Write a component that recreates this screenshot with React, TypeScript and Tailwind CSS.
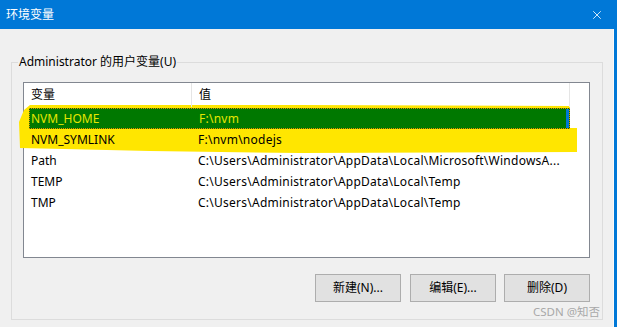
import { X } from "lucide-react";

const rows = [
  { name: "NVM_SYMLINK", value: "F:\\nvm\\nodejs" },
  { name: "Path", value: "C:\\Users\\Administrator\\AppData\\Local\\Microsoft\\WindowsA..." },
  { name: "TEMP", value: "C:\\Users\\Administrator\\AppData\\Local\\Temp" },
  { name: "TMP", value: "C:\\Users\\Administrator\\AppData\\Local\\Temp" },
];

export default function App() {
  return (
    <div className="relative w-[617px] h-[327px] bg-[#0078d7] flex flex-col text-[12px] leading-4 font-['Noto_Sans','Noto_Sans_CJK_SC',sans-serif] overflow-hidden">
      <header className="h-[29px] flex items-center justify-between shrink-0">
        <span className="ml-[6px] text-white">环境变量</span>
        <X className="mr-[13px] w-[14px] h-[14px] text-white" strokeWidth={1.4} />
      </header>

      <main className="flex-1 w-[614px] bg-[#f0f0f0] border-r border-[#fafafa]">
        <fieldset className="mt-[25px] ml-[11px] w-[592px] h-[266px] border border-[#dcdcdc]">
          <legend className="ml-[6px] px-[1px] text-black">Administrator 的用户变量(U)</legend>

          <div className="relative mt-[12px] ml-[11px] w-[567px] h-[176px] border border-[#828790] bg-white">
            {/* yellow marker scribble */}
            <svg className="absolute left-[-8px] top-[20px] pointer-events-none" width="565" height="54" viewBox="0 0 565 54">
              <path d="M14 2 L280 2 L554 3 L554 25 L561 25 L561 49 L284 50 L134 48 L4 45 L3 19 L8 7 Z" fill="#ffe600" />
            </svg>

            <div className="relative z-10 flex h-[24px] items-center text-black">
              <div className="w-[168px] h-full flex items-center pl-[7px] border-r border-[#e5e5e5]">变量</div>
              <div className="w-[378px] h-full flex items-center pl-[7px] border-r border-[#e5e5e5]">值</div>
            </div>

            <div className="relative z-10 mt-[1px] ml-[5px] w-[541px]">
              <div className="flex h-[21px] items-center bg-[#007800] border border-dotted border-[#e08a00] text-[#e6e600]">
                <span className="w-[169px] pl-[1px]">NVM_HOME</span>
                <span className="flex-1 tracking-[0.25px]">F:\nvm</span>
                <span className="w-[3px] h-full bg-[#0078d7]" />
              </div>
              {rows.map((r) => (
                <div key={r.name} className="flex h-[21px] items-center text-black">
                  <span className="w-[169px] pl-[2px]">{r.name}</span>
                  <span className="flex-1 whitespace-nowrap tracking-[0.25px]">{r.value}</span>
                </div>
              ))}
            </div>
          </div>

          <div className="mt-[16px] pr-[12px] flex justify-end">
            <button className="w-[86px] h-[28px] bg-[#e1e1e1] border border-[#adadad] text-black">新建(N)...</button>
            <button className="ml-[9px] w-[86px] h-[28px] bg-[#e1e1e1] border border-[#adadad] text-black">编辑(E)...</button>
            <button className="ml-[8px] w-[86px] h-[28px] bg-[#e1e1e1] border border-[#adadad] text-black">删除(D)</button>
          </div>
        </fieldset>
      </main>

      <span className="absolute left-[533px] top-[304px] text-[11.5px] text-[#a8a8a8]">CSDN @知否</span>
    </div>
  );
}
